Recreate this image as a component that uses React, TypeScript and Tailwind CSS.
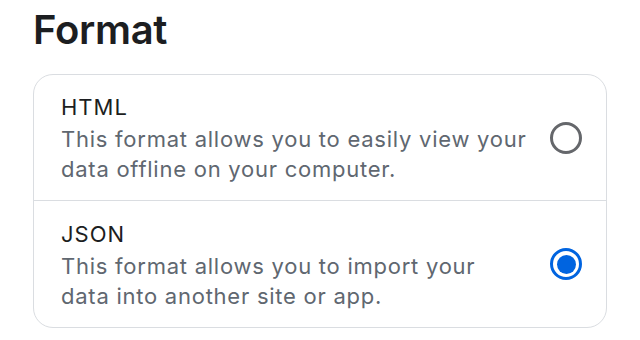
const options = [
  { label: 'HTML', desc: ['This format allows you to easily view your', 'data offline on your computer.'], selected: false },
  { label: 'JSON', desc: ['This format allows you to import your', 'data into another site or app.'], selected: true },
]

const Radio = ({ checked }: { checked: boolean }) => {
  if (checked) {
    return (
      <div className="w-[32px] h-[32px] rounded-full border-[3px] border-[#0064e0] flex items-center justify-center">
        <div className="w-[19px] h-[19px] rounded-full bg-[#0064e0]" />
      </div>
    )
  }
  return <div className="w-[32px] h-[32px] rounded-full border-[3px] border-[#65676b]" />
}

export default function App() {
  return (
    <div className="w-[640px] h-[340px] bg-white px-[33px] pt-[6px]" style={{ fontFamily: 'Inter, "Noto Sans", sans-serif' }}>
      <h1 className="text-[40px] leading-[48px] font-semibold tracking-[-0.3px] text-[#1c1e21]">Format</h1>
      <div className="mt-[20px] rounded-[20px] border border-[#dadde1] overflow-hidden">
        {options.map((o, i) => (
          <div key={o.label} className={'flex items-center justify-between h-[126px] pl-[27px] pr-[24px] ' + (i === 0 ? 'border-b border-[#dadde1]' : '')}>
            <div>
              <div className="text-[22px] leading-[33px] tracking-[1px] text-[#1c1e21]">{o.label}</div>
              {o.desc.map(d => (
                <div key={d} className="text-[22px] leading-[30px] tracking-[0.75px] text-[#606770]">{d}</div>
              ))}
            </div>
            <Radio checked={o.selected} />
          </div>
        ))}
      </div>
    </div>
  )
}
